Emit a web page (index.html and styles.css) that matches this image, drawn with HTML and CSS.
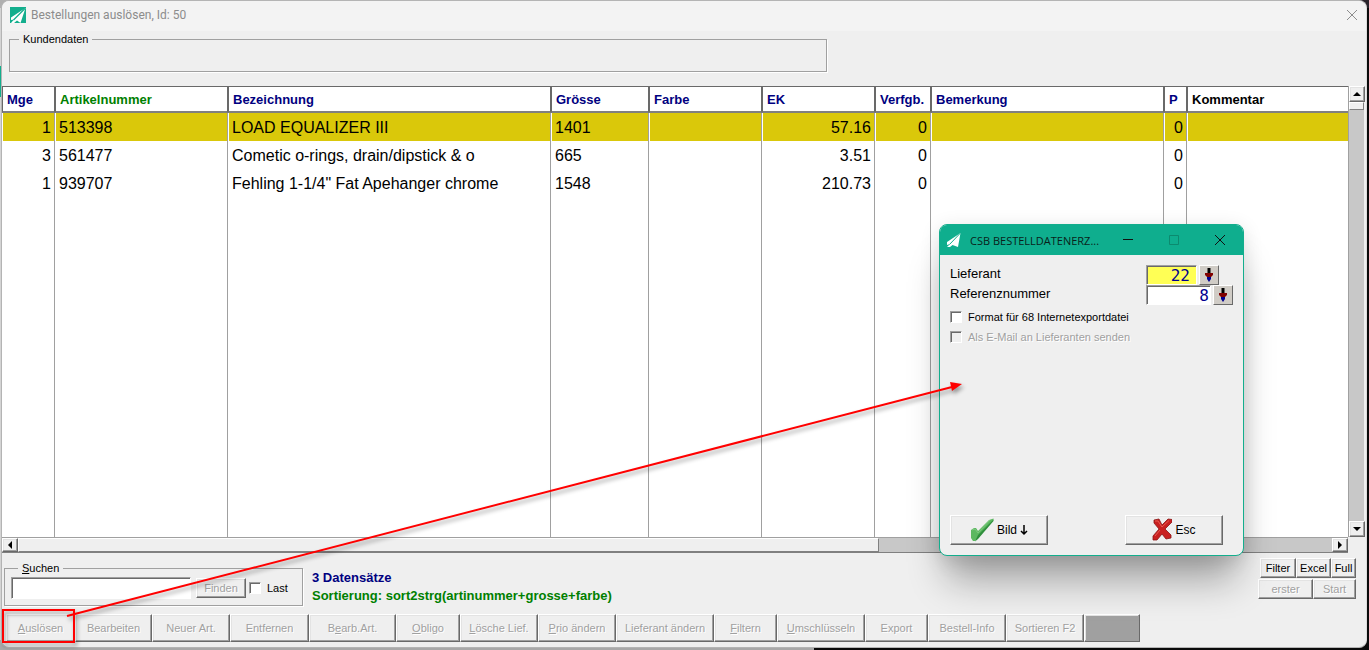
FILE: index.html
```html
<!DOCTYPE html>
<html lang="de">
<head>
  <meta charset="UTF-8">
  <meta name="viewport" content="width=device-width, initial-scale=1.0">
  <link rel="stylesheet" href="styles.css">
  <title>Bestellungen auslösen</title>
</head>
<body>
  <main class="window">
    <header class="titlebar">
      <svg class="logo" width="16" height="16" viewBox="0 0 16 16">
        <rect width="16" height="16" fill="#13ae8d"/>
        <path d="M15.500 1L1 10.500V13L4 12.500L1 16H4L7 13.500L10.500 16Z" fill="#fff"/>
        <path d="M15 1.500L3.500 13" stroke="#13ae8d" stroke-width="1.2"/>
      </svg>
      <h1>Bestellungen auslösen, Id: 50</h1>
      <button class="close" aria-label="Schliessen">
        <svg width="12" height="12" viewBox="0 0 12 12"><path d="M1 1L11 11M11 1L1 11" stroke="#8c8c8c"/></svg>
      </button>
    </header>

    <fieldset class="customer">
      <legend>Kundendaten</legend>
    </fieldset>

    <section class="list">
      <div class="table-wrap">
        <table>
          <colgroup>
            <col class="c-mge"><col class="c-artikel"><col class="c-bez"><col class="c-groesse"><col class="c-farbe">
            <col class="c-ek"><col class="c-verf"><col class="c-bem"><col class="c-p"><col>
          </colgroup>
          <thead>
            <tr>
              <th>Mge</th><th class="sorted">Artikelnummer</th><th>Bezeichnung</th><th>Grösse</th><th>Farbe</th>
              <th>EK</th><th>Verfgb.</th><th>Bemerkung</th><th>P</th><th class="comment">Kommentar</th>
            </tr>
          </thead>
          <tbody>
            <tr class="selected">
              <td class="num">1</td><td>513398</td><td>LOAD EQUALIZER III</td><td>1401</td><td></td>
              <td class="num">57.16</td><td class="num">0</td><td></td><td class="num">0</td><td></td>
            </tr>
            <tr>
              <td class="num">3</td><td>561477</td><td>Cometic o-rings, drain/dipstick &amp; o</td><td>665</td><td></td>
              <td class="num">3.51</td><td class="num">0</td><td></td><td class="num">0</td><td></td>
            </tr>
            <tr>
              <td class="num">1</td><td>939707</td><td>Fehling 1-1/4" Fat Apehanger chrome</td><td>1548</td><td></td>
              <td class="num">210.73</td><td class="num">0</td><td></td><td class="num">0</td><td></td>
            </tr>
            <tr class="filler">
              <td></td><td></td><td></td><td></td><td></td><td></td><td></td><td></td><td></td><td></td>
            </tr>
          </tbody>
        </table>
      </div>
      <div class="scroll vertical">
        <button class="btn" aria-label="Nach oben"><svg width="8" height="4" viewBox="0 0 8 4"><path d="M0 4L4 0L8 4Z"/></svg></button>
        <div class="thumb"></div>
        <button class="btn end" aria-label="Nach unten"><svg width="8" height="4" viewBox="0 0 8 4"><path d="M0 0L4 4L8 0Z"/></svg></button>
      </div>
      <div class="scroll horizontal">
        <button class="btn" aria-label="Nach links"><svg width="4" height="8" viewBox="0 0 4 8"><path d="M4 0L0 4L4 8Z"/></svg></button>
        <div class="thumb"></div>
        <button class="btn end" aria-label="Nach rechts"><svg width="4" height="8" viewBox="0 0 4 8"><path d="M0 0L4 4L0 8Z"/></svg></button>
      </div>
    </section>

    <footer>
      <div class="search-row">
        <fieldset class="search">
          <legend><label for="suchen"><u>S</u>uchen</label></legend>
          <div class="search-fields">
            <input type="text" id="suchen">
            <button class="btn find" disabled>Finden</button>
            <input type="checkbox" id="last">
            <label for="last">Last</label>
          </div>
        </fieldset>
        <div class="status">
          <p>3 Datensätze</p>
          <p class="sorted">Sortierung: sort2strg(artinummer+grosse+farbe)</p>
        </div>
        <div class="views">
          <div class="view-row first">
            <button class="btn">Filter</button><button class="btn">Excel</button><button class="btn">Full</button>
          </div>
          <div class="view-row second">
            <button class="btn" disabled>erster</button><button class="btn" disabled>Start</button>
          </div>
        </div>
      </div>
      <nav class="toolbar">
        <button class="btn" disabled><u>A</u>uslösen</button>
        <button class="btn" disabled>Bearbeiten</button>
        <button class="btn" disabled>Neuer Art.</button>
        <button class="btn" disabled>Entfernen</button>
        <button class="btn" disabled>B<u>e</u>arb.Art.</button>
        <button class="btn" disabled><u>O</u>bligo</button>
        <button class="btn" disabled><u>L</u>ösche Lief.</button>
        <button class="btn" disabled><u>P</u>rio ändern</button>
        <button class="btn" disabled>Lieferant ändern</button>
        <button class="btn" disabled><u>F</u>iltern</button>
        <button class="btn" disabled><u>U</u>mschlüsseln</button>
        <button class="btn" disabled>Export</button>
        <button class="btn" disabled>Bestell-Info</button>
        <button class="btn" disabled>Sortieren F2</button>
        <button class="btn blank" disabled aria-label="Leer"></button>
      </nav>
    </footer>
  </main>

  <section class="dialog" role="dialog" aria-labelledby="dialogTitle">
    <header>
      <svg width="14" height="14" viewBox="0 0 14 14">
        <path d="M13.500 0L0 9V12L3 11L0 14H3L5.500 12L11 14Z" fill="#fff"/>
        <path d="M13 .5L2.500 11.500" stroke="#13ae8d"/>
      </svg>
      <h2 id="dialogTitle">CSB BESTELLDATENERZ...</h2>
      <button aria-label="Minimieren"><svg width="12" height="12" viewBox="0 0 12 12"><path d="M1 5.500H11" stroke="#111"/></svg></button>
      <button aria-label="Maximieren" disabled><svg width="12" height="12" viewBox="0 0 12 12"><path d="M1.500 1.500H10.500V10.500H1.500Z" fill="none" stroke="#0c8a6f"/></svg></button>
      <button aria-label="Schliessen"><svg width="12" height="12" viewBox="0 0 12 12"><path d="M1 1L11 11M11 1L1 11" stroke="#111"/></svg></button>
    </header>
    <div class="dialog-body">
      <div class="field">
        <label for="lieferant">Lieferant</label>
        <input type="text" id="lieferant" class="supplier" value="22">
        <button class="pick" aria-label="Lieferant wählen">
          <svg width="10" height="14" viewBox="0 0 10 14"><path d="M3.500 0H6.500V5H3.500Z"/><path d="M1 5H9V7L7 9H3L1 7Z" fill="#800000"/><path d="M3 9H7V11L5 14L3 11Z" fill="#000090"/></svg>
        </button>
      </div>
      <div class="field">
        <label for="referenz">Referenznummer</label>
        <input type="text" id="referenz" class="reference" value="8">
        <button class="pick" aria-label="Referenz wählen">
          <svg width="10" height="14" viewBox="0 0 10 14"><path d="M3.500 0H6.500V5H3.500Z"/><path d="M1 5H9V7L7 9H3L1 7Z" fill="#800000"/><path d="M3 9H7V11L5 14L3 11Z" fill="#000090"/></svg>
        </button>
      </div>
      <div class="checks">
        <label><input type="checkbox">Format für 68 Internetexportdatei</label>
        <label class="off"><input type="checkbox" disabled>Als E-Mail an Lieferanten senden</label>
      </div>
      <div class="actions">
        <button class="btn">
          <svg width="24" height="24" viewBox="0 0 24 24">
            <path d="M1 12L4 10H6L8 13L19 2L23.500 .5V2L8 20L5 23H3L1 20Z" fill="#5cb860"/>
            <path d="M8 17L23.500 1.500V3L8 21L5 23.500Z" fill="#2f8f3c"/>
            <path d="M2 12L5 11L8 15L20 2" fill="none" stroke="#7cc87e"/>
          </svg>
          Bild
          <svg width="8" height="12" viewBox="0 0 8 12"><path d="M4 1V10M1 7L4 10L7 7" fill="none" stroke="#000" stroke-width="1.500"/></svg>
        </button>
        <button class="btn">
          <svg width="20" height="23" viewBox="0 0 20 23">
            <path d="M2 2L7 1L10 7L16 1L20 1.500V4L13 11L19 17V20L14 21L10 16L5 22L1 22V18L7 11L2 5Z" fill="#c92020" stroke="#8a1515" stroke-width=".8"/>
            <path d="M3 3L6 3L10 9L17 2.500M8 12L3 18" fill="none" stroke="#e85a50"/>
          </svg>
          Esc
        </button>
      </div>
    </div>
  </section>

  <!-- Markierung: Auslösen öffnet den Dialog -->
  <svg class="marker" width="980" height="650" viewBox="0 0 980 650">
    <g fill="none" stroke="#f00" stroke-width="2">
      <rect x="3" y="610" width="71" height="32"/>
      <path d="M67 616L952 387"/>
    </g>
    <path d="M962 384L950 382L952 391Z" fill="#f00"/>
  </svg>
</body>
</html>
```
FILE: styles.css
```css
* {
    box-sizing: border-box;
}

body {
    margin: 0;
    height: 100vh;
    padding: 0 2px 2px 1px;
    font-family: "Liberation Sans", Arial, sans-serif;
    font-size: 11px;
    color: #000;
    background:
        linear-gradient(#13ae8d, #13ae8d) 0 66px / 2px 31px no-repeat,
        linear-gradient(90deg, #a8a8a8 814px, #0a0a0a 814px) 0 100% / 100% 10px no-repeat,
        linear-gradient(90deg, #b0b0b0 757px, #2a242c 757px) 0 0 / 100% 8px no-repeat,
        linear-gradient(90deg, #d4d4d4 50%, #0a0a0a 50%);
    overflow: hidden;
}

button, input {
    font: inherit;
    color: inherit;
    margin: 0;
    padding: 0;
}

h1, h2, p {
    margin: 0;
}

.window {
    display: flex;
    flex-direction: column;
    height: 100%;
    border: 1px solid #b4b4b4;
    border-right-color: #dcdcdc;
    border-radius: 8px;
    background: #efefef;
    overflow: hidden;
}

.titlebar {
    display: flex;
    align-items: center;
    height: 30px;
    padding: 0 8px 2px;
    background: #f3f3f3;
}

.titlebar h1 {
    flex: 1;
    margin-left: 5px;
    font: 12px Roboto, sans-serif;
    color: #8c8c8c;
}

.close {
    display: flex;
    border: none;
    background: none;
}

fieldset {
    margin: 0;
    border: 1px solid #a0a0a0;
    box-shadow: 1px 1px #fff;
    min-width: 0;
}

legend {
    height: 14px;
    line-height: 14px;
    padding: 0 4px;
    margin-left: 9px;
}

.customer {
    width: 60%;
    height: 40px;
    margin: 1px 0 14px 7px;
    padding: 0;
}

/* Liste */
.list {
    flex: 1;
    min-height: 0;
    display: grid;
    grid-template-columns: 1fr 16px;
    grid-template-rows: 1fr 16px;
    margin-right: 2px;
}

.table-wrap {
    min-height: 0;
    background: #fff;
    overflow: hidden;
}

table {
    width: 100%;
    height: 100%;
    table-layout: fixed;
    border-collapse: separate;
    border-spacing: 0;
}

.c-mge { width: 53px; }
.c-artikel { width: 173px; }
.c-bez { width: 323px; }
.c-groesse { width: 98px; }
.c-farbe { width: 113px; }
.c-ek { width: 113px; }
.c-verf { width: 56px; }
.c-bem { width: 233px; }
.c-p { width: 23px; }

th {
    height: 27px;
    padding: 0 0 0 4px;
    border: 1px solid #696969;
    border-bottom: 2px solid #808080;
    text-align: left;
    font-size: 13px;
    color: #000080;
    white-space: nowrap;
}

td {
    height: 28px;
    padding: 2px 3px 0;
    border-left: 1px solid #fff;
    border-right: 1px solid #a0a0a0;
    font-size: 16px;
    line-height: 20px;
    white-space: nowrap;
}

th:last-child, td:last-child {
    border-right: none;
}

.num {
    text-align: right;
}

.selected td {
    background: #dac80a;
    background-clip: padding-box;
}

.filler td {
    height: auto;
}

.sorted {
    color: #008000;
}

.comment {
    color: #000;
}

/* Knöpfe */
.btn {
    display: flex;
    align-items: center;
    justify-content: center;
    padding-bottom: 1px;
    border: 1px solid;
    border-color: #fff #696969 #696969 #fff;
    box-shadow: inset -1px -1px #a0a0a0, inset 1px 1px #e3e3e3;
    background: #efefef;
    white-space: nowrap;
}

.btn:disabled, .off {
    color: #a0a0a0;
    text-shadow: 1px 1px #fff;
}

.scroll {
    display: flex;
    background: #c8c8c8;
}

.scroll .btn {
    flex: none;
    width: 16px;
    height: 16px;
}

.scroll .end {
    margin-left: auto;
}

.vertical {
    flex-direction: column;
    border-left: 1px solid #a0a0a0;
}

.vertical .end {
    margin: auto 0 0;
}

.thumb {
    border: 1px solid;
    border-color: #fff #808080 #808080 #fff;
    background: #efefef;
}

.vertical .thumb {
    height: 8px;
}

.horizontal .thumb {
    width: 64%;
}

.horizontal {
    border-top: 1px solid #a0a0a0;
    border-bottom: 1px solid #808080;
}

.horizontal .btn {
    height: 14px;
}

/* Fusszeile */
footer {
    padding: 5px 10px 5px 2px;
}

.search-row {
    display: flex;
    align-items: flex-start;
}

.search {
    width: 299px;
    height: 45px;
    margin-top: 3px;
    padding: 2px 6px;
}

.search legend {
    margin-left: 7px;
}

.search-fields {
    display: flex;
    align-items: center;
}

input[type="text"] {
    height: 20px;
    border: 1px solid;
    border-color: #a0a0a0 #fff #fff #a0a0a0;
    box-shadow: inset 1px 1px #696969;
    border-radius: 0;
    background: #fff;
    outline: none;
}

.search-fields #suchen {
    width: 180px;
    height: 22px;
}

.find {
    width: 50px;
    height: 20px;
    margin: 0 3px 0 5px;
}

input[type="checkbox"] {
    appearance: none;
    width: 12px;
    height: 12px;
    border: 1px solid;
    border-color: #a0a0a0 #fff #fff #a0a0a0;
    box-shadow: inset 1px 1px #696969;
    background: #fff;
}

input[type="checkbox"]:disabled {
    background: #efefef;
}

#last {
    margin-right: 6px;
}

.status {
    margin: 11px 0 0 9px;
    font-size: 13px;
    font-weight: bold;
    line-height: 18px;
}

.status p:first-child {
    color: #000080;
}

.views {
    margin-left: auto;
}

.view-row {
    display: grid;
    justify-content: end;
}

.view-row .btn {
    height: 20px;
}

.first {
    grid-template-columns: 36px 35px 25px;
    margin-bottom: 1px;
}

.second {
    grid-template-columns: 55px 43px;
}

.toolbar {
    display: grid;
    grid-template-columns: 69px 77px 78px 79px 87px 64px 78px 78px 98px 63px 88px 63px 78px 78px 56px;
    margin: 8px 0 0 2px;
}

.toolbar .btn {
    height: 28px;
}

.toolbar .blank {
    background: #a0a0a0;
}

/* Dialog */
.dialog {
    position: absolute;
    top: 224px;
    right: 125px;
    display: flex;
    flex-direction: column;
    width: 305px;
    height: 332px;
    border: 1px solid #13ae8d;
    border-radius: 8px;
    background: #efefef;
    box-shadow: 0 32px 36px -8px rgba(0, 0, 0, 0.32), 0 4px 20px rgba(0, 0, 0, 0.12);
}

.dialog header {
    display: flex;
    align-items: center;
    height: 30px;
    padding: 0 0 0 7px;
    border-radius: 7px 7px 0 0;
    background: #0fae8e;
}

.dialog h2 {
    flex: 1;
    margin-left: 9px;
    font: 11px "Open Sans", sans-serif;
    color: #0a1f1a;
    white-space: nowrap;
}

.dialog header button {
    display: flex;
    justify-content: center;
    width: 46px;
    border: none;
    background: none;
}

.dialog-body {
    flex: 1;
    display: flex;
    flex-direction: column;
    padding: 10px 20px 10px 10px;
}

.field {
    display: flex;
    height: 20px;
    margin-right: -10px;
}

.field label {
    width: 196px;
    font-size: 13px;
    line-height: 17px;
}

.field input {
    padding-right: 1px;
    font: 16px "DejaVu Sans Mono", monospace;
    color: #000090;
    text-align: right;
}

.field .supplier {
    width: 51px;
    padding-right: 6px;
    background: #ffff55;
}

.reference {
    width: 65px;
}

.pick {
    display: flex;
    align-items: center;
    justify-content: center;
    width: 20px;
    height: 20px;
    margin-left: 2px;
    border: 1px solid;
    border-color: #fff #696969 #696969 #fff;
    background: #d0ccc6;
}

.checks {
    margin-top: 2px;
}

.checks label {
    display: flex;
    align-items: center;
    gap: 6px;
    height: 20px;
}

.actions {
    display: flex;
    justify-content: space-between;
    margin-top: auto;
}

.actions .btn {
    gap: 3px;
    width: 98px;
    height: 30px;
    font-size: 12px;
}

.marker {
    position: absolute;
    top: 0;
    left: 0;
    pointer-events: none;
    filter: drop-shadow(2px 3px 2px rgba(0, 0, 0, 0.4));
}
```
